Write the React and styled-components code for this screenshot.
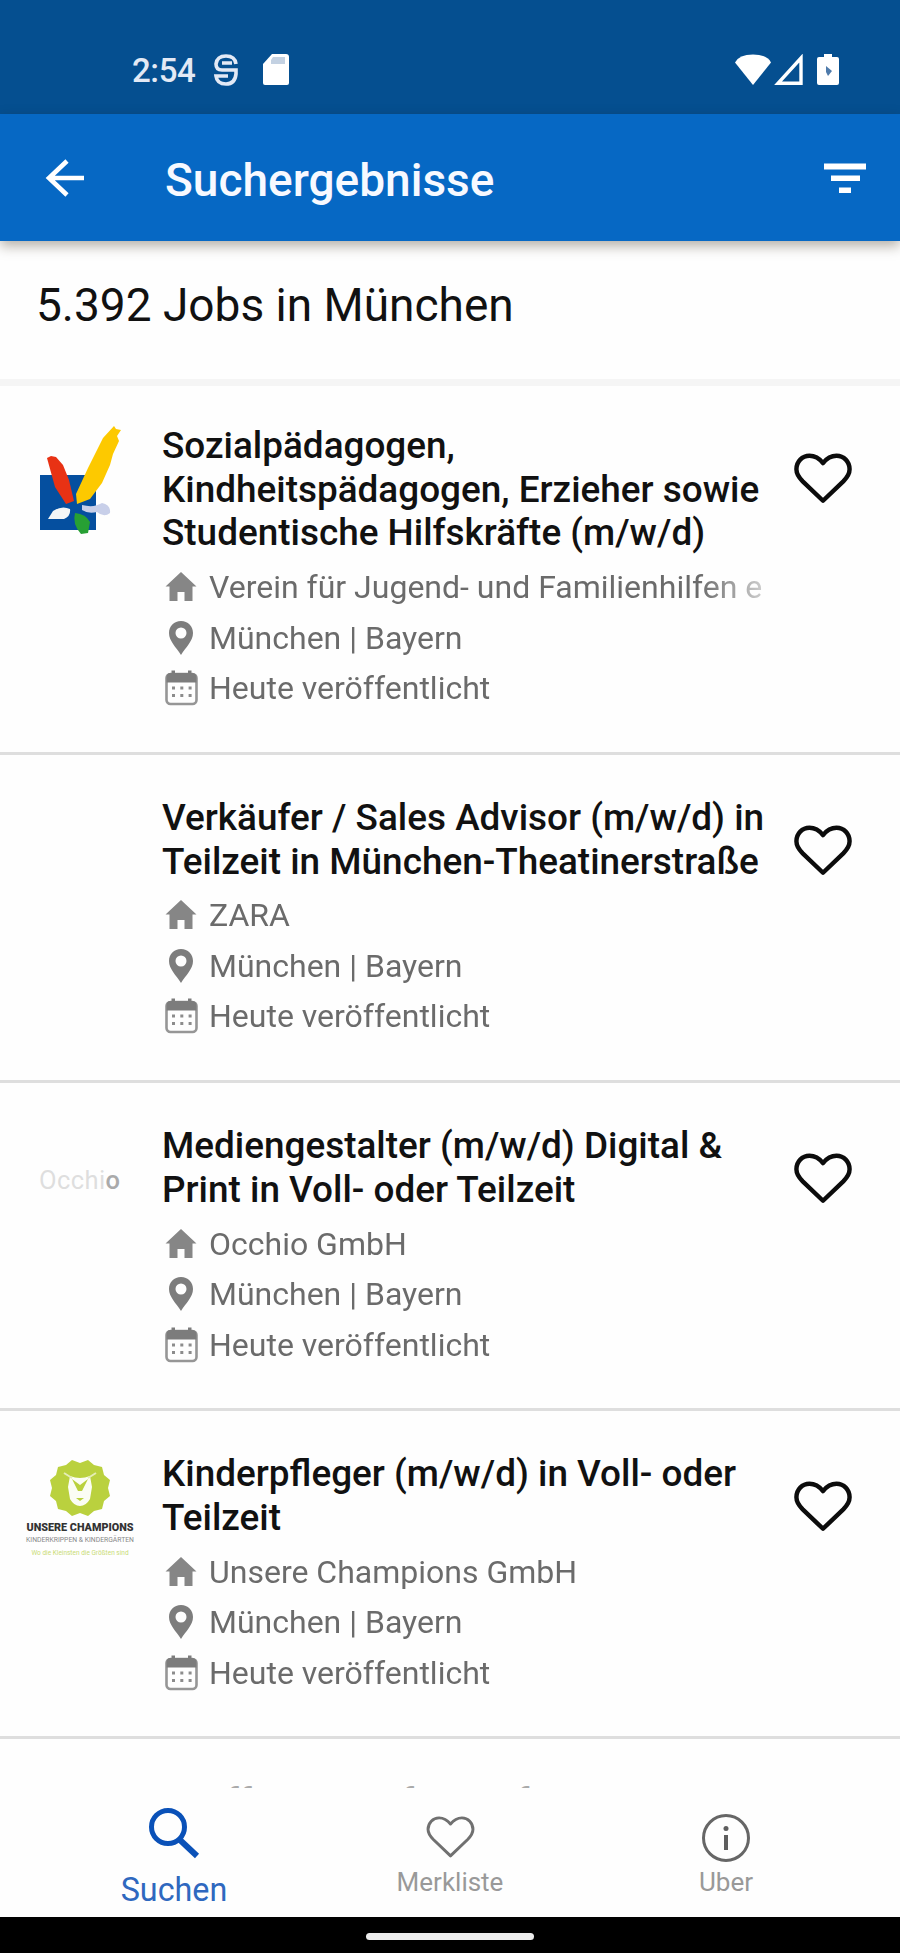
import React from "react";
import styled, { createGlobalStyle } from "styled-components";

const jobs = [
  {
    logo: "brush",
    title: ["Sozialpädagogen,", "Kindheitspädagogen, Erzieher sowie", "Studentische Hilfskräfte (m/w/d)"],
    company: "Verein für Jugend- und Familienhilfen e.",
  },
  {
    title: ["Verkäufer / Sales Advisor (m/w/d) in", "Teilzeit in München-Theatinerstraße"],
    company: "ZARA",
  },
  {
    logo: "occhio",
    title: ["Mediengestalter (m/w/d) Digital &", "Print in Voll- oder Teilzeit"],
    company: "Occhio GmbH",
  },
  {
    logo: "champions",
    title: ["Kinderpfleger (m/w/d) in Voll- oder", "Teilzeit"],
    company: "Unsere Champions GmbH",
  },
];

const HeartIcon = ({ size, stroke, color }) => (
  <svg width={size} height={size} viewBox="0 0 60 60" fill="none" stroke={color} strokeWidth={stroke} strokeLinejoin="round">
    <path d="M30 52.500 L9 32.500 C4 27.500 2.500 24 2.500 20 C2.500 12 8.500 6 16 6 C22 6 26 8.500 30 13.500 C34 8.500 38 6 44 6 C51.500 6 57.500 12 57.500 20 C57.500 24 56 27.500 51 32.500 Z" />
  </svg>
);

const HouseIcon = () => (
  <svg width="34" height="34" viewBox="0 0 34 34" fill="#868686">
    <path d="M17 2 L32.500 16.500 H28.500 V31 H20.500 V22 H13.500 V31 H5.500 V16.500 H1.500 Z" />
  </svg>
);

const PinIcon = () => (
  <svg width="34" height="36" viewBox="0 0 34 36" fill="#7d7d7d" fillRule="evenodd">
    <path d="M17 1 C10 1 5 6 5 13 C5 21 12 27 17 35 C22 27 29 21 29 13 C29 6 24 1 17 1 Z M17 7.500 A5.500 5.500 0 1 1 17 18.500 A5.500 5.500 0 1 1 17 7.500 Z" />
  </svg>
);

const CalendarIcon = () => (
  <svg width="34" height="36" viewBox="0 0 34 36">
    <rect x="2.500" y="4" width="30" height="30" rx="4" fill="none" stroke="#969696" strokeWidth="2.600" />
    <path d="M2.500 12.500 V7 Q3 3 6 3 H7.500 V0.500 H11 V3 H24 V0.500 H27.500 V3 H28 Q32 3 32.500 7 V12.500 Z" fill="#7c7c7c" />
    <g fill="#8c8c8c">
      {[8, 16.3, 24.6].map((x) => (
        <React.Fragment key={x}>
          <rect x={x} y="16.500" width="3" height="3" />
          <rect x={x} y="24" width="3" height="3" />
        </React.Fragment>
      ))}
    </g>
  </svg>
);

const BrushLogo = () => (
  <svg width="90" height="112" viewBox="0 0 90 112">
    <rect x="4" y="50" width="56" height="55" fill="#054f9f" />
    <path d="M11 33 L15 31 L20 32 L27 40 L33 55 L38 76 L30 79 L19 62 Z" fill="#e83214" />
    <path d="M78 1 L80 4 L85 5 L81 11 L83 16 L77 29 L74 40 L66 58 L54 74 L41 79 L40 69 L52 43 L67 13 Z" fill="#fdc900" />
    <path d="M12 94 L17 86 Q26 80 34 84 Q35 91 28 94 Z" fill="#f4f6f6" />
    <path d="M46 80 Q58 83 66 78 Q75 80 74 88 Q68 93 61 87 Q52 89 46 85 Z" fill="#c8cfe9" />
    <path d="M39 88 Q50 89 54 97 L52 108 L45 109 Q36 99 39 88 Z" fill="#27a034" />
  </svg>
);

const ChampionsLogo = () => (
  <svg width="112" height="62" viewBox="0 0 112 62">
    <path
      d="M48 1 L56 4 L64 1 L70 6 L78 8 L80 16 L86 21 L84 29 L86 37 L80 42 L78 50 L70 52 L64 57 L56 54 L48 57 L42 52 L34 50 L32 42 L26 37 L28 29 L26 21 L32 16 L34 8 L42 6 Z"
      fill="#bad13e"
    />
    <path d="M46 17 Q56 21 66 17 L68 28 L66 40 Q62 47 56 47 Q50 47 46 40 L44 28 Z" fill="#fbfdf4" />
    <path d="M48 20 L56 26 L64 20 L58 32 H54 Z M52 39 H60 L56 42 Z" fill="#bad13e" />
    <path d="M40 14 L48 19 M72 14 L64 19" stroke="#e4edb5" strokeWidth="2" />
  </svg>
);

export default () => (
  <>
    <GlobalStyle />
    <Screen>
      <StatusBar>
        <Clock>2:54</Clock>
        <svg width="26" height="34" viewBox="0 0 26 34" fill="none" stroke="#e3e9f5" strokeWidth="3.600">
          <path d="M23 11 Q22 3 13 3 Q4 3 3 11 Q3 17 9 17 H23 V21 Q22 31 13 31 Q4 31 3 23 H15 M9 10 H19" />
        </svg>
        <SdCard width="26" height="32" viewBox="0 0 26 32">
          <path d="M9 0 H23 Q26 0 26 3 V29 Q26 31 24 31 H2 Q0 31 0 29 V10 Z" fill="#fff" />
          <path d="M10 3 H22 V10 H8 V6 Z" fill="#c3d1e2" />
        </SdCard>
        <StatusIcons>
          <svg width="36" height="31" viewBox="0 0 36 31" fill="#fff">
            <path d="M0 8.500 Q4 0.500 18 0.500 Q32 0.500 36 8.500 L18 31 Z" />
          </svg>
          <svg width="29" height="31" viewBox="0 0 29 31" fill="none" stroke="#fff" strokeWidth="3.400">
            <path d="M27 4 V29.300 H4 Z" />
          </svg>
          <Battery width="22" height="32" viewBox="0 0 22 32">
            <path d="M7 0 H15 V3 H20 Q22 3 22 5 V29 Q22 31 20 31 H2 Q0 31 0 29 V5 Q0 3 2 3 H7 Z" fill="#fff" />
            <path d="M9 12 L15 17 L11 22 L9 18 Z" fill="#4f7bab" />
          </Battery>
        </StatusIcons>
      </StatusBar>
      <AppBar>
        <svg width="40" height="38" viewBox="0 0 40 38" fill="none" stroke="#fff" strokeWidth="4.600">
          <path d="M39 19 H4 M22 2 L4 19 L22 36" />
        </svg>
        <AppTitle>Suchergebnisse</AppTitle>
        <svg width="44" height="32" viewBox="0 0 44 32" fill="#fff">
          <path d="M1 1.500 H43 V7.500 H1 Z M8 13.500 H37 V19 H8 Z M16 25.500 H28 V31 H16 Z" />
        </svg>
      </AppBar>
      <Summary>5.392 Jobs in München</Summary>
      <List>
        {jobs.map((job) => (
          <Job key={job.company}>
            <LogoCell>
              {job.logo === "brush" && <BrushLogo />}
              {job.logo === "occhio" && (
                <Occhio>
                  Occhi<b>o</b>
                </Occhio>
              )}
              {job.logo === "champions" && (
                <Champions>
                  <ChampionsLogo />
                  <Tiny $size="10.8" $weight="900" $color="#333">UNSERE CHAMPIONS</Tiny>
                  <Tiny $size="6.8" $color="#888">KINDERKRIPPEN &amp; KINDERGÄRTEN</Tiny>
                  <Tiny $size="6.5" $color="#c9dc74">Wo die Kleinsten die Größten sind</Tiny>
                </Champions>
              )}
            </LogoCell>
            <Details>
              <Title>
                {job.title.map((line) => (
                  <div key={line}>{line}</div>
                ))}
              </Title>
              <Meta>
                <HouseIcon />
                <MetaText>{job.company}</MetaText>
              </Meta>
              <Meta>
                <PinIcon />
                <MetaText>München | Bayern</MetaText>
              </Meta>
              <Meta>
                <CalendarIcon />
                <MetaText>Heute veröffentlicht</MetaText>
              </Meta>
            </Details>
            <Favorite>
              <HeartIcon size={58} stroke={4.6} color="#0c0c0c" />
            </Favorite>
          </Job>
        ))}
        <NextJob>
          <Title $faded>Kauffrau / Kaufmann für Büro</Title>
        </NextJob>
      </List>
      <TabBar>
        <Tab $active>
          <svg width="52" height="52" viewBox="0 0 52 52" fill="none" stroke="#0a51b8" strokeWidth="5">
            <circle cx="20" cy="20" r="16.500" />
            <path d="M32 33 L49 49" strokeWidth="6" />
          </svg>
          <TabLabel $active>Suchen</TabLabel>
        </Tab>
        <Tab>
          <HeartIcon size={49} stroke={3.6} color="#707070" />
          <TabLabel $gap={4}>Merkliste</TabLabel>
        </Tab>
        <Tab>
          <svg width="50" height="50" viewBox="0 0 50 50" fill="#5e5e5e">
            <circle cx="25" cy="25" r="22.500" fill="none" stroke="#666" strokeWidth="3" />
            <circle cx="25" cy="15.500" r="2.500" />
            <rect x="23" y="22" width="4" height="15" />
          </svg>
          <TabLabel $gap={3}>Uber</TabLabel>
        </Tab>
      </TabBar>
      <GestureBar>
        <Handle />
      </GestureBar>
    </Screen>
  </>
);

const GlobalStyle = createGlobalStyle`
  body {
    margin: 0;
    background: #fff;
    font-family: Roboto, sans-serif;
  }
  * {
    box-sizing: border-box;
  }
  svg {
    display: block;
    flex-shrink: 0;
  }
`;

const Screen = styled.div`
  display: flex;
  flex-direction: column;
  width: 900px;
  height: 1953px;
  overflow: hidden;
  background: #fefefe;
`;

const StatusBar = styled.div`
  display: flex;
  align-items: center;
  height: 114px;
  padding: 25px 61px 0 132px;
  background: #054f90;
  flex-shrink: 0;
`;

const Clock = styled.div`
  width: 81px;
  padding-top: 2px;
  font-size: 33px;
  font-weight: 500;
  letter-spacing: -0.4px;
  color: #e3e9f5;
`;

const SdCard = styled.svg`
  margin-left: 24px;
`;

const StatusIcons = styled.div`
  display: flex;
  gap: 3px;
  margin-left: auto;
`;

const Battery = styled.svg`
  margin-left: 11px;
`;

const AppBar = styled.div`
  display: flex;
  align-items: center;
  height: 127px;
  padding: 0 33px 0 45px;
  background: #0668c4;
  box-shadow: 0 5px 12px rgba(40, 30, 10, 0.35);
  flex-shrink: 0;
  z-index: 1;
`;

const AppTitle = styled.div`
  flex: 1;
  margin-left: 80px;
  padding-top: 4px;
  font-size: 46px;
  font-weight: 500;
  color: #f7f9ff;
`;

const Summary = styled.div`
  height: 145px;
  padding: 35px 36px 0;
  border-bottom: 7px solid #f5f5f5;
  font-size: 46px;
  line-height: 58px;
  color: #111;
  flex-shrink: 0;
`;

const List = styled.div`
  flex: 1;
  min-height: 0;
  margin-top: -3px;
  overflow: hidden;
`;

const Job = styled.div`
  display: flex;
  padding: 41px 0 38.2px;
  border-bottom: 3px solid #dedede;
`;

const LogoCell = styled.div`
  width: 162px;
  padding: 1px 0 0 36px;
`;

const Occhio = styled.div`
  padding-top: 40px;
  margin-left: 3px;
  font-size: 25.5px;
  letter-spacing: 0.4px;
  color: #dedede;

  b {
    font-weight: 500;
    color: #aaa;
  }
`;

const Champions = styled.div`
  display: flex;
  flex-direction: column;
  align-items: center;
  width: 112px;
  padding-top: 6px;
  margin-left: -12px;
`;

const Tiny = styled.div`
  font-size: ${(p) => p.$size}px;
  font-weight: ${(p) => p.$weight || 400};
  color: ${(p) => p.$color};
  line-height: 13px;
  white-space: nowrap;
`;

const Details = styled.div`
  width: 602px;
`;

const Title = styled.div`
  margin-bottom: 7px;
  font-size: 36.9px;
  font-weight: 500;
  line-height: 43.7px;
  color: ${(p) => (p.$faded ? "#aaa" : "#111")};
  white-space: nowrap;
`;

const Meta = styled.div`
  display: flex;
  align-items: center;
  height: 50.5px;
  padding-left: 2px;
`;

const MetaText = styled.div`
  flex: 1;
  margin-left: 11px;
  overflow: hidden;
  font-size: 32px;
  color: #6b6b6b;
  white-space: nowrap;
  mask-image: linear-gradient(to right, #000 490px, transparent 585px);
`;

const Favorite = styled.div`
  padding: 26px 0 0 30px;
`;

const NextJob = styled.div`
  padding: 41px 0 0 162px;
`;

const TabBar = styled.div`
  display: flex;
  justify-content: center;
  height: 129px;
  padding-top: 19px;
  background: #fefefe;
  flex-shrink: 0;
`;

const Tab = styled.div`
  display: flex;
  flex-direction: column;
  align-items: center;
  width: 276px;
  padding-top: ${(p) => (p.$active ? 0 : 6)}px;
`;

const TabLabel = styled.div`
  margin-top: ${(p) => (p.$active ? 11 : p.$gap)}px;
  font-size: ${(p) => (p.$active ? 32.3 : 26)}px;
  line-height: ${(p) => (p.$active ? 40 : 32)}px;
  color: ${(p) => (p.$active ? "#2f68bf" : "#999")};
`;

const GestureBar = styled.div`
  display: flex;
  justify-content: center;
  height: 36px;
  padding-top: 16px;
  background: #000;
  flex-shrink: 0;
`;

const Handle = styled.div`
  width: 168px;
  height: 7px;
  border-radius: 4px;
  background: #ececec;
`;
